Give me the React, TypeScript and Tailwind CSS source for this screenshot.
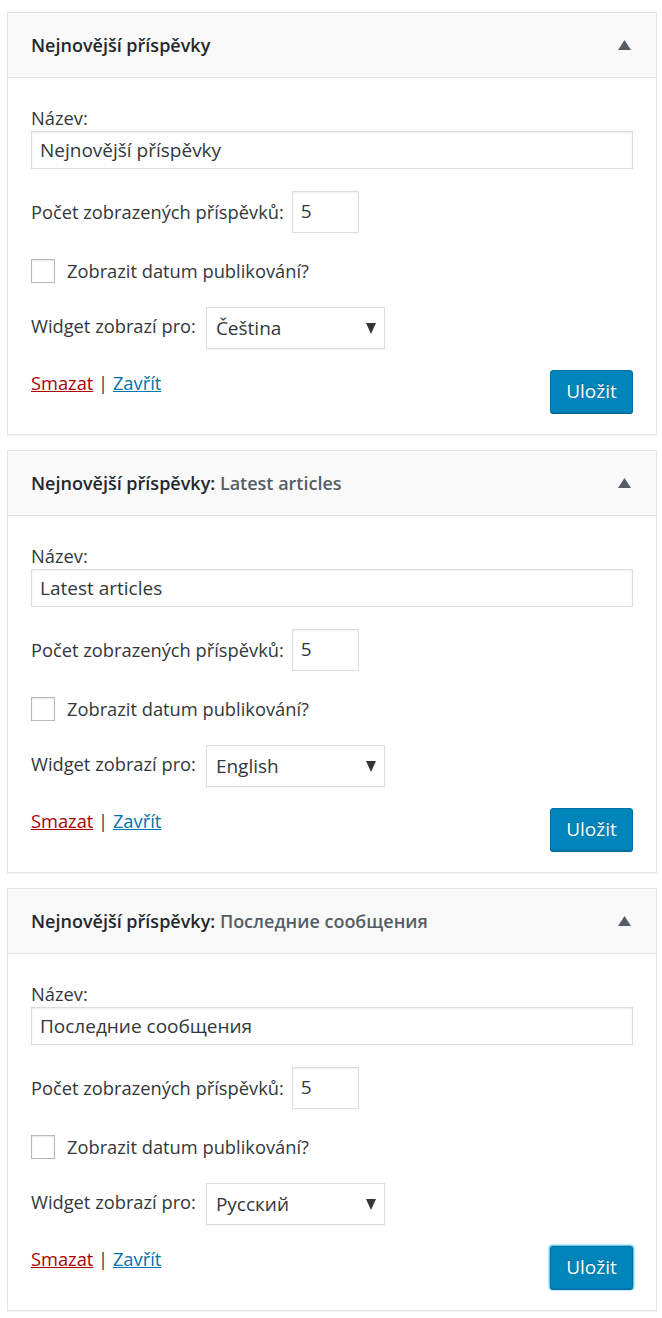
import React from "react";

type Widget = { sub?: string; title: string; lang: string; focused?: boolean };

const widgets: Widget[] = [
  { title: "Nejnovější příspěvky", lang: "Čeština" },
  { sub: "Latest articles", title: "Latest articles", lang: "English" },
  { sub: "Последние сообщения", title: "Последние сообщения", lang: "Русский", focused: true },
];

function UpArrow() {
  return (
    <svg width="13" height="10" viewBox="0 0 13 10" className="fill-[#555d66]">
      <path d="M6.5 0 L13 10 L0 10 Z" />
    </svg>
  );
}

function DownArrow() {
  return (
    <svg width="10" height="11" viewBox="0 0 10 11" className="fill-[#32373c]">
      <path d="M0 0 L10 0 L5 11 Z" />
    </svg>
  );
}

function WidgetPanel({ w }: { w: Widget }) {
  return (
    <div className="border border-[#e5e5e5] bg-white shadow-[0_1px_1px_rgba(0,0,0,0.04)]">
      <div className="flex h-[65px] items-center justify-between border-b border-[#e5e5e5] bg-[#f9f9f9] pl-[23px] pr-[25px]">
        <h3 className="text-[18px] font-semibold text-[#23282d]">
          Nejnovější příspěvky{w.sub && <>: <span className="text-[#555d66]">{w.sub}</span></>}
        </h3>
        <UpArrow />
      </div>
      <div className="px-[23px] pt-[27px] pb-[21px] text-[18.3px] text-[#32373c]">
        <label className="block leading-[26px]">Název:</label>
        <div className="flex h-[38px] items-center border border-[#ddd] px-[8px] text-[19px] text-[#32373c] shadow-[inset_0_1px_2px_rgba(0,0,0,0.07)]">
          {w.title}
        </div>

        <div className="mt-[22px] flex h-[42px] items-center gap-[8px]">
          <span>Počet zobrazených příspěvků:</span>
          <div className="flex h-[42px] w-[67px] items-start border border-[#ddd] px-[8px] pt-[5px] text-[19px] shadow-[inset_0_1px_2px_rgba(0,0,0,0.07)]">
            5
          </div>
        </div>

        <div className="mt-[26px] flex h-[24px] items-center gap-[12px]">
          <span className="block h-[24px] w-[24px] border border-[#b4b9be] bg-white shadow-[inset_0_1px_2px_rgba(0,0,0,0.1)]" />
          <span className="leading-[24px]">Zobrazit datum publikování?</span>
        </div>

        <div className="mt-[24px] flex h-[42px] items-center gap-[10px]">
          <span className="-mt-[4px]">Widget zobrazí pro:</span>
          <div className="flex h-[42px] w-[179px] items-center justify-between border border-[#ddd] pl-[9px] pr-[8px] text-[19px] shadow-[0_1px_1px_rgba(0,0,0,0.04)]">
            <span>{w.lang}</span>
            <DownArrow />
          </div>
        </div>

        <div className="mt-[21px] flex items-start justify-between">
          <div className="leading-[26px]">
            <a className="text-[#a00] underline">Smazat</a>
            <span className="text-[#32373c]"> | </span>
            <a className="text-[#0073aa] underline">Zavřít</a>
          </div>
          <button
            className={`h-[43px] w-[83px] rounded-[3px] border border-[#0073aa] bg-[#0085ba] text-[19px] text-white [text-shadow:0_-1px_1px_#006799] ${
              w.focused ? "shadow-[0_1px_0_#0073aa,0_0_2px_1px_#33b3db]" : "shadow-[0_1px_0_#006799]"
            }`}
          >
            Uložit
          </button>
        </div>
      </div>
    </div>
  );
}

export default function App() {
  return (
    <div className="flex flex-col gap-[15px] bg-white pt-[12px] pb-[6px] pl-[7px] pr-[5px] font-['Open_Sans','Noto_Sans',sans-serif]">
      {widgets.map((w, i) => (
        <WidgetPanel key={i} w={w} />
      ))}
    </div>
  );
}
